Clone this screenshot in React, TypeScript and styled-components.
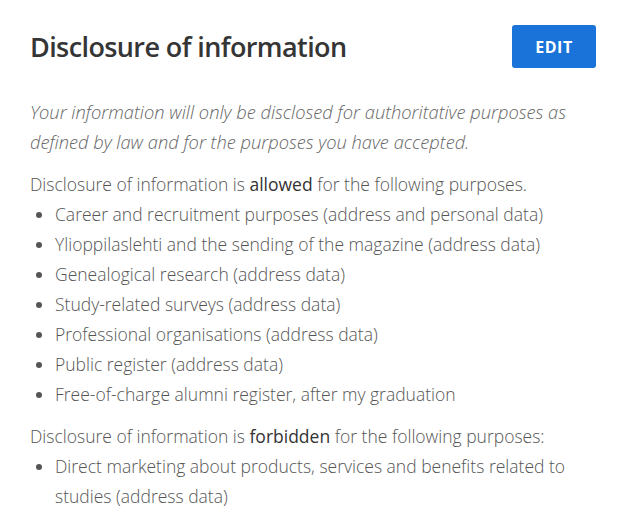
import React from 'react';
import styled, { createGlobalStyle } from 'styled-components';

const GlobalStyle = createGlobalStyle`
  body {
    margin: 0;
    background: #ffffff;
    font-family: 'Open Sans', 'Noto Sans', sans-serif;
  }
`;

const allowed = [
  'Career and recruitment purposes (address and personal data)',
  'Ylioppilaslehti and the sending of the magazine (address data)',
  'Genealogical research (address data)',
  'Study-related surveys (address data)',
  'Professional organisations (address data)',
  'Public register (address data)',
  'Free-of-charge alumni register, after my graduation'
];

const forbidden = [
  'Direct marketing about products, services and benefits related to studies (address data)'
];

const App = () => {
  return (
    <>
      <GlobalStyle />
      <Wrapper>
        <Header>
          <Title>Disclosure of information</Title>
          <EditButton>EDIT</EditButton>
        </Header>
        <Intro>
          Your information will only be disclosed for authoritative purposes as defined by law and for
          the purposes you have accepted.
        </Intro>
        <Section>
          <Lead>
            Disclosure of information is <strong>allowed</strong> for the following purposes.
          </Lead>
          <List>
            {allowed.map((item, index) => (
              <Item key={index}>{item}</Item>
            ))}
          </List>
        </Section>
        <Section>
          <Lead>
            Disclosure of information is <strong>forbidden</strong> for the following purposes:
          </Lead>
          <List>
            {forbidden.map((item, index) => (
              <Item key={index}>{item}</Item>
            ))}
          </List>
        </Section>
      </Wrapper>
    </>
  );
};

export default App;

const Wrapper = styled.div`
  width: 634px;
  box-sizing: border-box;
  padding: 25px 38px 0 30px;
`;

const Header = styled.div`
  display: flex;
  justify-content: space-between;
  align-items: center;
  height: 43px;
`;

const Title = styled.h2`
  margin: 0;
  font-size: 27px;
  font-weight: 600;
  color: #353535;
  letter-spacing: -0.6px;
`;

const EditButton = styled.button`
  width: 84px;
  height: 43px;
  border: none;
  border-radius: 3px;
  background: #1a73d9;
  color: #ffffff;
  font-family: 'Open Sans', sans-serif;
  font-size: 16px;
  font-weight: 700;
  letter-spacing: 0.5px;
`;

const Intro = styled.p`
  margin: 29px 0 0;
  font-size: 18.3px;
  font-style: italic;
  font-weight: 300;
  line-height: 30px;
  color: #666666;
`;

const Section = styled.div`
  margin-top: 12px;
`;

const Lead = styled.p`
  margin: 0;
  font-size: 17.5px;
  font-weight: 300;
  line-height: 30px;
  color: #555555;

  strong {
    font-weight: 500;
    color: #333333;
  }
`;

const List = styled.ul`
  margin: 0;
  padding-left: 25px;
`;

const Item = styled.li`
  font-size: 17.5px;
  font-weight: 300;
  line-height: 30px;
  color: #555555;
`;
